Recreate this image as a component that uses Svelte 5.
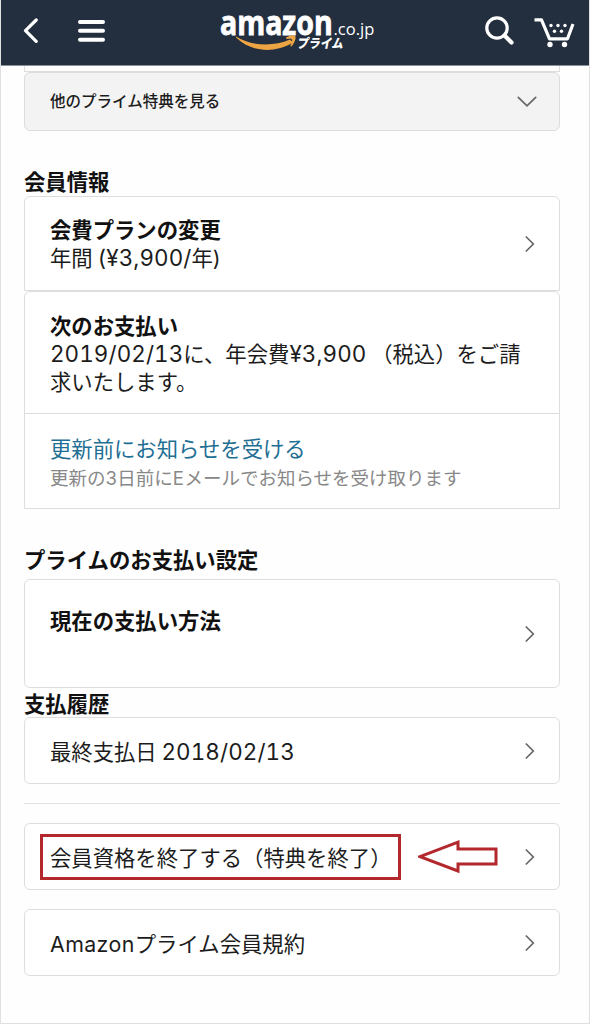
<script lang="ts">
  type Row = { name: string; label: string; latin?: string; tail?: string; marked?: boolean };

  const rows: Row[] = [
    { name: 'cancel', label: '会員資格を終了する（特典を終了）', marked: true },
    { name: 'terms', latin: 'Amazon', label: '', tail: 'プライム会員規約' }
  ];
</script>

{#snippet chevron()}
  <svg class="chevron" viewBox="0 0 10 16" width="10" height="16">
    <path d="M1.3 1 L8.3 8 L1.3 15" />
  </svg>
{/snippet}

<div class="page">
  <header class="topbar">
    <button class="icon-button back" aria-label="戻る">
      <svg viewBox="0 0 16 26" width="16" height="26">
        <path d="M13.2 2 L2.5 12.7 L13.2 23.4" fill="none" stroke="#fff" stroke-width="3.2" stroke-linecap="round" stroke-linejoin="round" />
      </svg>
    </button>
    <button class="icon-button menu" aria-label="メニュー">
      <svg viewBox="0 0 27 24" width="27" height="24">
        <path d="M2 3 H25 M2 11.7 H25 M2 20.7 H25" stroke="#fff" stroke-width="4" stroke-linecap="round" />
      </svg>
    </button>
    <svg class="logo" viewBox="0 -7 160 64" width="160" height="64">
      <text class="brand" transform="translate(2 27.6) scale(0.89 1.04)">amazon</text>
      <text class="domain" x="115.5" y="27.5">.co.jp</text>
      <path d="M18 29.5 C33 39 55 40 72 32.6 L75 35.5 C57 46.5 33 45.5 18 30.6 Z" fill="#eda443" />
      <path d="M68 30.6 C71.5 28.2 76.5 28 77.4 29.2 C78.2 30.8 76.6 36.5 73.4 39.3 C72.5 39.8 72.1 39.4 72.5 38.5 C73.8 35.7 74.5 33.2 73.9 32.4 C73 31.6 70.6 31.8 68.4 32 Z" fill="#eda443" />
      <text class="prime" x="79" y="41" textLength="46" lengthAdjust="spacingAndGlyphs" transform="translate(7 0) skewX(-10)">プライム</text>
    </svg>
    <button class="icon-button search" aria-label="検索">
      <svg viewBox="0 0 32 32" width="32" height="32">
        <circle cx="13" cy="13" r="10.2" fill="none" stroke="#fff" stroke-width="3.2" />
        <path d="M20.5 20.5 L27.5 27.5" stroke="#fff" stroke-width="4.2" stroke-linecap="round" />
      </svg>
    </button>
    <button class="icon-button cart" aria-label="カート">
      <svg viewBox="0 0 42 32" width="42" height="32">
        <path d="M1.5 3.8 H8.5 L16.5 22.8 H34.5 L40 8" fill="none" stroke="#fff" stroke-width="3.2" stroke-linejoin="round" />
        <g fill="#fff">
          <circle cx="17" cy="28.5" r="2.7" />
          <circle cx="31.5" cy="28.5" r="2.7" />
          <circle cx="18" cy="9.5" r="1.7" />
          <circle cx="25" cy="9.5" r="1.7" />
          <circle cx="32" cy="9.5" r="1.7" />
          <circle cx="21.5" cy="15.3" r="1.7" />
          <circle cx="28.5" cy="15.3" r="1.7" />
        </g>
      </svg>
    </button>
  </header>

  <main>
    <div class="previous"></div>
    <div class="card more">
      <span>他のプライム特典を見る</span>
      <svg viewBox="0 0 20 12" width="20" height="12">
        <path d="M1.3 1.3 L10 9.8 L18.7 1.3" fill="none" stroke="#666" stroke-width="1.7" stroke-linecap="round" />
      </svg>
    </div>

    <h2 class="member">会員情報</h2>
    <div class="card plan">
      <div>
        <h3>会費プランの変更</h3>
        <p>年間 <span class="latin number">(¥3,900/</span>年<span class="latin">)</span></p>
      </div>
      {@render chevron()}
    </div>
    <div class="card payment">
      <div class="next">
        <h3>次のお支払い</h3>
        <p><span class="latin number">2019/02/13</span>に、年会費<span class="latin number">¥3,900</span> （税込）をご請<br />求いたします。</p>
      </div>
      <div class="notice">
        <a href="#notice">更新前にお知らせを受ける</a>
        <small>更新の<span class="latin">3</span>日前に<span class="latin">E</span>メールでお知らせを受け取ります</small>
      </div>
    </div>

    <h2 class="settings">プライムのお支払い設定</h2>
    <div class="card method">
      <h3>現在の支払い方法</h3>
      {@render chevron()}
    </div>

    <h2 class="history">支払履歴</h2>
    <div class="card single">
      <p>最終支払日 <span class="latin number">2018/02/13</span></p>
      {@render chevron()}
    </div>

    <hr />

    {#each rows as row (row.name)}
      <div class="card single {row.name}">
        <p class:marked={row.marked}>{#if row.latin}<span class="latin">{row.latin}</span>{/if}{row.label}{row.tail ?? ''}</p>
        {#if row.marked}
          <svg class="arrow" viewBox="0 0 80 34" width="80" height="34">
            <path d="M2 16.6 L40 2.2 V9 H78 V24 H40 V31 Z" fill="none" stroke="#b3282d" stroke-width="3" />
          </svg>
        {/if}
        {@render chevron()}
      </div>
    {/each}
  </main>
</div>

<style>
  :global(body) {
    background: #fefefe;
  }

  .page {
    box-sizing: border-box;
    width: 590px;
    height: 1024px;
    overflow: hidden;
    border: 1px solid #e0e0e0;
    border-top: 0;
    color: #1c1c1c;
    font-family: 'Noto Sans CJK JP', sans-serif;
    font-size: 21.35px;
    line-height: 28px;
  }

  .topbar {
    display: flex;
    box-sizing: border-box;
    height: 66px;
    margin: 0 -1px;
    padding-left: 23px;
    background: #232f3f;
    border-bottom: 1px solid #8b919b;
  }

  .icon-button {
    display: flex;
    padding: 0;
    background: none;
    border: 0;
  }

  .back {
    margin-top: 18px;
  }

  .menu {
    margin: 19px 0 0 39px;
  }

  .logo {
    margin: 0 0 0 113px;
    overflow: visible;
    fill: #fff;
  }

  .brand {
    font: 700 32px 'Open Sans', sans-serif;
    stroke: #fff;
    stroke-width: 0.8px;
  }

  .domain {
    font: 400 16.5px 'Open Sans', sans-serif;
  }

  .prime {
    font: 900 13px 'Noto Sans CJK JP', sans-serif;
  }

  .search {
    margin: 15px 0 0 106px;
  }

  .cart {
    margin: 16px 0 0 17px;
  }

  main {
    display: flex;
    flex-direction: column;
    padding: 0 29px 0 23px;
  }

  h2,
  h3,
  p {
    margin: 0;
    font-size: inherit;
    line-height: 28px;
  }

  h2,
  h3 {
    color: #111;
    font-weight: 700;
  }

  p {
    font-weight: 400;
    white-space: nowrap;
  }

  .card {
    display: flex;
    box-sizing: border-box;
    align-items: center;
    justify-content: space-between;
    padding: 0 24px 0 25px;
    background: #fff;
    border: 1.5px solid #ddd;
    border-radius: 6px;
  }

  .previous {
    height: 5px;
    border: solid #ddd;
    border-width: 0 1px 1px;
  }

  .more {
    height: 59px;
    padding-right: 22px;
    background: #f3f3f3;
    font-size: 15.5px;
    font-weight: 500;
  }

  .more span {
    padding-bottom: 3px;
  }

  .member {
    margin: 36px 0 1px;
  }

  .plan {
    height: 95px;
    border-radius: 6px 6px 0 0;
  }

  .plan h3 {
    margin-top: -1px;
  }

  .payment {
    flex-direction: column;
    align-items: stretch;
    height: 218px;
    padding: 0;
    border-radius: 6px 6px 0 0;
  }

  .next {
    flex: none;
    box-sizing: border-box;
    height: 122px;
    padding: 19px 0 0 25px;
    border-bottom: 1px solid #ddd;
  }

  .notice {
    display: flex;
    flex: 1;
    flex-direction: column;
    padding: 20px 0 0 25px;
  }

  a {
    color: #1f6f94;
    text-decoration: none;
  }

  small {
    color: #888;
    font-size: 18.5px;
    line-height: 30px;
  }

  .settings {
    margin-top: 36px;
  }

  .method {
    height: 109px;
    margin-top: 6px;
    padding-bottom: 0;
  }

  .method h3 {
    margin-bottom: 27px;
  }

  .history {
    margin-top: 1px;
  }

  .single {
    height: 67px;
  }

  hr {
    width: 100%;
    height: 1px;
    margin: 19px 0;
    background: #e2e2e2;
    border: 0;
  }

  .cancel {
    margin-bottom: 19px;
  }

  .marked {
    flex: none;
    box-sizing: border-box;
    width: 361px;
    height: 46px;
    margin-left: -10px;
    padding-left: 7px;
    border: 3px solid #b3282d;
    line-height: 40px;
  }

  .arrow {
    margin-right: 11px;
  }

  .latin {
    font-family: Inter, 'Liberation Sans', sans-serif;
    letter-spacing: 0.4px;
    line-height: 1;
  }

  .number {
    font-size: 22.4px;
    font-variant-numeric: tabular-nums;
    letter-spacing: 0.1px;
  }

  .chevron {
    flex: none;
    fill: none;
    stroke: #666;
    stroke-width: 1.7;
    stroke-linecap: round;
  }
</style>
